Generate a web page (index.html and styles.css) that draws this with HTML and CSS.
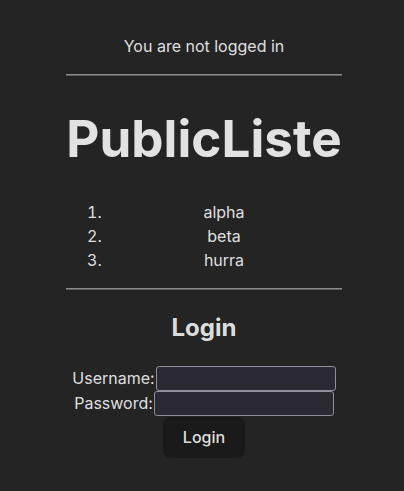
FILE: index.html
```html
<!DOCTYPE html>
<html lang="en">
<head>
<meta charset="utf-8">
<title>PublicListe</title>
<link rel="stylesheet" href="styles.css">
</head>
<body>
<div class="app">
  <div class="status">You are not logged in</div>
  <hr class="rule">
  <h1 class="title">PublicListe</h1>
  <ol class="list">
    <li>alpha</li>
    <li>beta</li>
    <li>hurra</li>
  </ol>
  <hr class="rule">
  <h2 class="subtitle">Login</h2>
  <form class="login">
    <div class="row"><label for="u">Username:</label><input id="u" class="field" type="text"></div>
    <div class="row"><label for="p">Password:</label><input id="p" class="field" type="password"></div>
    <div class="row"><button type="button" class="btn">Login</button></div>
  </form>
</div>
</body>
</html>
```
FILE: styles.css
```css
html, body {
  margin: 0;
  padding: 0;
  background: #242424;
}
body {
  font-family: Inter, "Liberation Sans", sans-serif;
  font-size: 16px;
  line-height: 1.5;
  font-weight: 400;
  color: rgba(255, 255, 255, 0.87);
}
.app {
  width: 276px;
  margin: 0 auto;
  padding: 34px 0 0 4px;
  text-align: center;
}
.status {
  height: 24px;
  margin-bottom: 16px;
}
.rule {
  margin: 0;
  height: 0;
  border: none;
  border-top: 1px solid #8c8c8c;
  border-bottom: 1px solid #5e5e5e;
}
.title {
  font-size: 51.2px;
  line-height: 1.1;
  font-weight: 700;
  margin: 34.3px 0 33.3px;
}
.list {
  margin: 0 0 16px;
  padding-left: 40px;
}
.list li {
  line-height: 24px;
}
.subtitle {
  font-size: 24px;
  line-height: 36px;
  font-weight: 700;
  margin: 19.9px 0;
}
.login {
  margin: 0;
  display: flex;
  flex-direction: column;
  align-items: center;
}
.row {
  display: flex;
  align-items: center;
  justify-content: center;
}
.row label {
  margin-right: 1px;
}
.field {
  box-sizing: border-box;
  width: 180px;
  height: 25px;
  margin: 0;
  padding: 1px 2px;
  background: #2b2a33;
  border: 1px solid #8f8f9d;
  border-radius: 3px;
  color: #fbfbfe;
  font: 13.33px Inter, sans-serif;
}
.btn {
  margin-top: 1px;
  border-radius: 8px;
  border: 1px solid transparent;
  padding: 0.6em 1.2em;
  font-size: 1em;
  font-weight: 500;
  font-family: inherit;
  line-height: normal;
  background-color: #1a1a1a;
  color: rgba(255, 255, 255, 0.87);
  cursor: pointer;
}
```
